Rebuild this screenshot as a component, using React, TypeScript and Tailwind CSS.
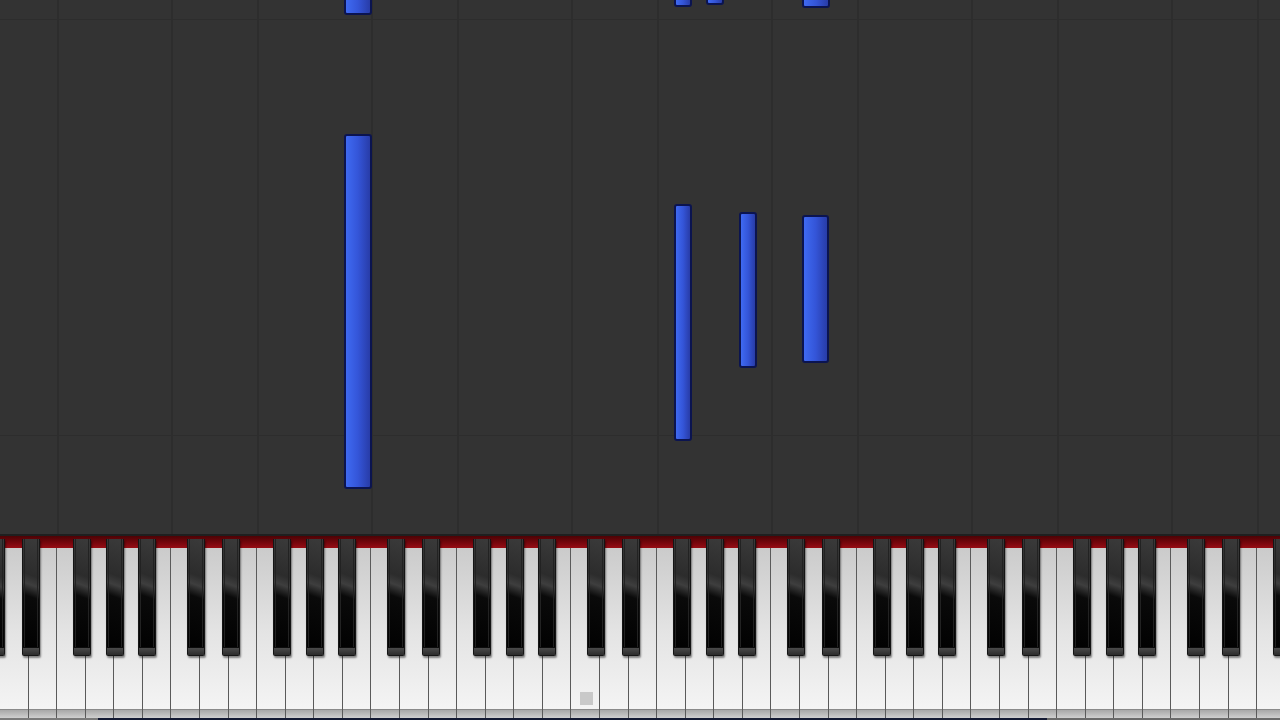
import React from 'react';

type Note = { left: number; top: number; width: number; height: number };

// falling notes, px on the roll canvas
const notes: Note[] = [
  { left: 344, top: -20, width: 28, height: 35 },
  { left: 344, top: 134, width: 28, height: 355 },
  { left: 674, top: -15, width: 18, height: 22 },
  { left: 706, top: -15, width: 18, height: 20 },
  { left: 802, top: -15, width: 28, height: 23 },
  { left: 674, top: 204, width: 18, height: 237 },
  { left: 739, top: 212, width: 18, height: 156 },
  { left: 802, top: 215, width: 27, height: 148 },
];

// black key offsets inside one 200px octave (C..B)
const blackKeys = [16, 51, 102, 135, 167];

const WhiteKey = () => (
  <div className="flex-1 h-full flex flex-col border-r border-[#5a5a5a] bg-gradient-to-b from-[#cbcbcb] via-[#e4e4e4] to-[#f6f6f6]">
    <div className="flex-1" />
    <div className="h-[9px] bg-gradient-to-b from-[#a8a8a8] to-[#cfcfcf] border-t border-[#8a8a8a]" />
  </div>
);

const BlackKey = ({ left }: { left: number }) => (
  <div
    className="absolute top-[-9px] w-[18px] h-[117px] flex flex-col border-x border-b border-[#151515] rounded-b-[2px] bg-[linear-gradient(200deg,#3a3a3a_0%,#2c2c2c_32%,#3e3e3e_40%,#0a0a0a_50%,#000_100%)] shadow-[1px_2px_2px_rgba(0,0,0,0.45)]"
    style={{ left }}
  >
    <div className="flex-1 mx-[1px] border-x border-[#222]" />
    <div className="h-[8px] bg-gradient-to-b from-[#4a4a4a] to-[#2c2c2c] border-t border-[#0c0c0c]" />
  </div>
);

const Octave = () => (
  <div className="relative w-[200px] h-full shrink-0 flex">
    {Array.from({ length: 7 }).map((_, i) => (
      <WhiteKey key={i} />
    ))}
    {blackKeys.map((l) => (
      <BlackKey key={l} left={l} />
    ))}
  </div>
);

const GridColumns = () => (
  <div className="absolute inset-0 flex -ml-[28.6px]">
    {Array.from({ length: 7 }).map((_, i) => (
      <React.Fragment key={i}>
        <div className="w-[85.7px] h-full shrink-0 border-l-2 border-[#2d2d2d]" />
        <div className="w-[114.3px] h-full shrink-0 border-l-2 border-[#2d2d2d]" />
      </React.Fragment>
    ))}
  </div>
);

export default function App() {
  return (
    <div className="w-[1280px] h-[720px] overflow-hidden flex flex-col bg-[#333333] font-['Liberation_Sans',sans-serif]">
      {/* note roll */}
      <div className="relative flex-1">
        <GridColumns />
        <div className="absolute inset-x-0 top-[19px] h-[1px] bg-[#2d2d2d]" />
        <div className="absolute inset-x-0 top-[435px] h-[1px] bg-[#2d2d2d]" />
        {notes.map((n, i) => (
          <div
            key={i}
            className="absolute rounded-[3px] border-2 border-[#0b1450] bg-gradient-to-r from-[#3f6af2] via-[#3455d8] to-[#283ca8]"
            style={{ left: n.left, top: n.top, width: n.width, height: n.height }}
          />
        ))}
      </div>

      {/* keyboard */}
      <div className="relative h-[186px] shrink-0 flex flex-col border-t-2 border-[#1f1f1f]">
        <div className="h-[12px] bg-gradient-to-b from-[#4e0205] to-[#980c14]" />
        <div className="h-[170px] flex -ml-[28.6px]">
          {Array.from({ length: 7 }).map((_, i) => (
            <Octave key={i} />
          ))}
        </div>
        <div className="flex-1 flex bg-[#2a2a2a]">
          <div className="w-[98px] bg-[#7a7a7a]" />
          <div className="w-[949px] bg-[#141a33]" />
          <div className="flex-1 bg-[#6a6a6a]" />
        </div>
        <div className="absolute left-[580px] top-[156px] w-[13px] h-[13px] bg-[#c9c9c9]" />
      </div>
    </div>
  );
}
